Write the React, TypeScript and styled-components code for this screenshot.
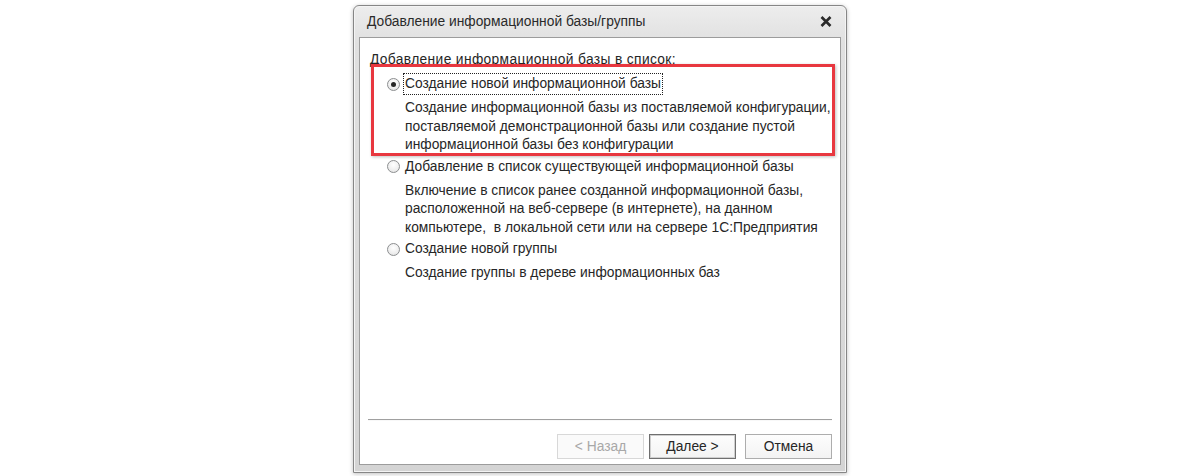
import React from "react";
import styled, { createGlobalStyle } from "styled-components";

const GlobalStyle = createGlobalStyle`
  html, body {
    margin: 0;
    padding: 0;
    background: #ffffff;
  }
  body {
    font-family: "Liberation Sans", Arial, sans-serif;
    color: #262626;
  }
`;

const Page = styled.div`
  width: 1200px;
  height: 476px;
  display: flex;
  justify-content: center;
  align-items: flex-start;
  padding-top: 5px;
  box-sizing: border-box;
  background: #ffffff;
`;

const Dialog = styled.div`
  width: 494px;
  height: 468px;
  box-sizing: border-box;
  display: flex;
  flex-direction: column;
  border: 1px solid #868686;
  border-radius: 6px 6px 0 0;
  padding: 0 5px 7px 5px;
  background: linear-gradient(#ededed 0%, #e0e0e0 8%, #d4d4d4 100%);
  box-shadow: 0 1px 4px rgba(0, 0, 0, 0.25), inset 0 0 0 1px #f4f4f4;
`;

const TitleBar = styled.div`
  height: 31px;
  flex: none;
  display: flex;
  align-items: center;
  justify-content: space-between;
  padding: 0 7px 0 8px;
`;

const Title = styled.span`
  font-size: 13.8px;
  color: #2a2a2a;
`;

const CloseButton = styled.div`
  width: 16px;
  height: 16px;
  display: flex;
  align-items: center;
  justify-content: center;
`;

const Client = styled.div`
  flex: 1;
  display: flex;
  flex-direction: column;
  background: #ffffff;
  border: 1px solid #9c9c9c;
  padding: 13px 0 5px 0;
  font-size: 13.8px;
`;

const Header = styled.div`
  line-height: 18px;
  padding-left: 10px;
  margin-bottom: 6px;
  letter-spacing: 0.35px;
`;

const OptionList = styled.div`
  display: flex;
  flex-direction: column;
  gap: 3px;
  padding-left: 27px;
`;

const Option = styled.div`
  position: relative;
  display: flex;
  flex-direction: column;
`;

const RadioRow = styled.div`
  height: 18px;
  display: flex;
  align-items: center;
  margin-bottom: 6px;
`;

const RadioCircle = styled.span<{ $checked?: boolean }>`
  width: 11px;
  height: 11px;
  border-radius: 50%;
  border: 1px solid #8c8e90;
  background: radial-gradient(circle at 50% 35%, #ffffff 0%, #eeeeee 60%, #dcdcdc 100%);
  display: flex;
  align-items: center;
  justify-content: center;
  flex: none;
  margin-right: 3px;

  &::after {
    content: "";
    display: ${(p) => (p.$checked ? "block" : "none")};
    width: 5px;
    height: 5px;
    border-radius: 50%;
    background: #262626;
  }
`;

const RadioLabel = styled.span<{ $focused?: boolean }>`
  line-height: 18px;
  padding: 1px 1px;
  border: 1px dotted ${(p) => (p.$focused ? "#222" : "transparent")};
  white-space: nowrap;
`;

const Description = styled.div`
  line-height: 18.5px;
  padding-left: 18px;
  white-space: pre;
`;

const Highlight = styled.div`
  position: absolute;
  left: -16px;
  right: 5px;
  top: -11px;
  bottom: -1px;
  border: 3px solid #e8373f;
  box-shadow: 1px 1px 3px rgba(0, 0, 0, 0.25);
  pointer-events: none;
`;

const Spacer = styled.div`
  flex: 1;
`;

const Separator = styled.div`
  height: 1px;
  background: #a0a0a0;
  margin: 0 8px;
  box-shadow: 0 1px 0 #f8f8f8;
`;

const ButtonRow = styled.div`
  display: flex;
  justify-content: flex-end;
  margin-top: 14px;
  padding-right: 8px;
`;

const Button = styled.div<{ $disabled?: boolean; $default?: boolean; $gap?: number }>`
  width: 85px;
  height: 23px;
  margin-left: ${(p) => p.$gap ?? 0}px;
  display: flex;
  align-items: center;
  justify-content: center;
  font-size: 13.8px;
  color: ${(p) => (p.$disabled ? "#a8a8a8" : "#262626")};
  background: ${(p) =>
    p.$disabled ? "#fafafa" : "linear-gradient(#fdfdfd, #f3f3f3)"};
  border: 1px solid
    ${(p) => (p.$disabled ? "#d8d8d8" : p.$default ? "#6f6f6f" : "#adadad")};
  box-shadow: ${(p) => (p.$default ? "inset 0 0 0 1px #cfcfcf" : "none")};
`;

const CloseIcon = () => (
  <svg width="12" height="11" viewBox="0 0 12 11">
    <path d="M1.5 1 L10.5 10 M10.5 1 L1.5 10" stroke="#2a2a2a" strokeWidth="2.6" strokeLinecap="butt" />
  </svg>
);

const options = [
  {
    label: "Создание новой информационной базы",
    checked: true,
    highlighted: true,
    lines: [
      "Создание информационной базы из поставляемой конфигурации,",
      "поставляемой демонстрационной базы или создание пустой",
      "информационной базы без конфигурации",
    ],
  },
  {
    label: "Добавление в список существующей информационной базы",
    checked: false,
    highlighted: false,
    lines: [
      "Включение в список ранее созданной информационной базы,",
      "расположенной на веб-сервере (в интернете), на данном",
      "компьютере,  в локальной сети или на сервере 1С:Предприятия",
    ],
  },
  {
    label: "Создание новой группы",
    checked: false,
    highlighted: false,
    lines: ["Создание группы в дереве информационных баз"],
  },
];

export default function App() {
  return (
    <>
      <GlobalStyle />
      <Page>
        <Dialog>
          <TitleBar>
            <Title>Добавление информационной базы/группы</Title>
            <CloseButton>
              <CloseIcon />
            </CloseButton>
          </TitleBar>
          <Client>
            <Header>Добавление информационной базы в список:</Header>
            <OptionList>
              {options.map((o) => (
                <Option key={o.label}>
                  <RadioRow>
                    <RadioCircle $checked={o.checked} />
                    <RadioLabel $focused={o.checked}>{o.label}</RadioLabel>
                  </RadioRow>
                  {o.lines.map((l) => (
                    <Description key={l}>{l}</Description>
                  ))}
                  {o.highlighted && <Highlight />}
                </Option>
              ))}
            </OptionList>
            <Spacer />
            <Separator />
            <ButtonRow>
              <Button $disabled>&lt; Назад</Button>
              <Button $default $gap={5}>Далее &gt;</Button>
              <Button $gap={9}>Отмена</Button>
            </ButtonRow>
          </Client>
        </Dialog>
      </Page>
    </>
  );
}
